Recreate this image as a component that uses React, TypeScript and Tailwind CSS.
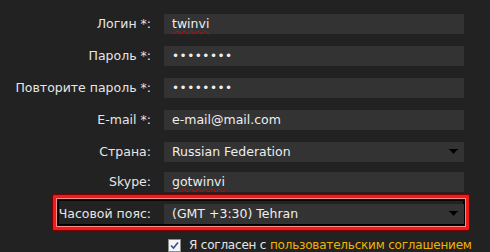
import React from 'react';

const font = { fontFamily: '"DejaVu Sans", Verdana, sans-serif' };

function Arrow() {
  return (
    <svg width="9" height="6" viewBox="0 0 9 6" className="shrink-0">
      <rect x="0" y="0" width="9" height="1" fill="#000" />
      <polygon points="1,1 8,1 4.5,5" fill="#000" />
    </svg>
  );
}

function Row({
  label,
  children,
  className = '',
}: {
  label: string;
  children: React.ReactNode;
  className?: string;
}) {
  return (
    <div className={`flex items-center ${className}`}>
      <label className="w-[152px] shrink-0 pr-[1px] text-right whitespace-nowrap text-[#e6e6e6]">{label}</label>
      <div className="ml-3 w-[300px]">{children}</div>
    </div>
  );
}

function Field({ children }: { children: React.ReactNode }) {
  return (
    <div className="flex h-5 items-center bg-[#333333] px-2 text-[#eeeeee]">{children}</div>
  );
}

function Select({ value }: { value: string }) {
  return (
    <div className="flex h-5 items-center justify-between bg-[#333333] pl-2 pr-[6px] text-[#eeeeee]">
      <span>{value}</span>
      <Arrow />
    </div>
  );
}

const Spell = ({ children }: { children: React.ReactNode }) => (
  <span className="underline decoration-wavy decoration-[#d00] decoration-1 underline-offset-2">
    {children}
  </span>
);

const Dots = () => <span className="text-[12px] tracking-[0.5px]">••••••••</span>;

export default function App() {
  return (
    <div className="h-[252px] w-[490px] overflow-hidden bg-[#222222] pt-[14px] text-[12.5px]" style={font}>
      <Row label="Логин *:">
        <Field>
          <Spell>twinvi</Spell>
        </Field>
      </Row>
      <Row label="Пароль *:" className="mt-3">
        <Field>
          <Dots />
        </Field>
      </Row>
      <Row label="Повторите пароль *:" className="mt-3">
        <Field>
          <Dots />
        </Field>
      </Row>
      <Row label="E-mail *:" className="mt-3">
        <Field>e-mail@mail.com</Field>
      </Row>
      <Row label="Страна:" className="mt-3">
        <Select value="Russian Federation" />
      </Row>
      <Row label="Skype:" className="mt-[10px]">
        <Field>
          <Spell>gotwinvi</Spell>
        </Field>
      </Row>
      <div className="ml-[53px] mt-[3px] h-[35px] w-[416px] rounded-[1px] border-[3px] border-[#ee1c1c] shadow-[0_0_0_1px_#7a0000,inset_0_0_0_1px_#ff8a8a,inset_0_0_0_3px_#000]">
        <div className="-ml-[56px] mt-[6px]">
          <Row label="Часовой пояс:">
            <Select value="(GMT +3:30) Tehran" />
          </Row>
        </div>
      </div>
      <div className="ml-[168px] mt-[6px] flex items-center gap-2 whitespace-nowrap text-[12px] tracking-[-0.2px] text-[#e6e6e6]">
        <span className="flex h-[13px] w-[13px] shrink-0 items-center justify-center border border-[#8c8c8c] bg-[#f4f4f4]">
          <svg width="9" height="9" viewBox="0 0 9 9">
            <path d="M1 4.5 L3.5 7 L8 1.5" stroke="#3a4f9a" strokeWidth="1.6" fill="none" />
          </svg>
        </span>
        <span>
          Я согласен с <span className="text-[#f0b400]">пользовательским соглашением</span>
        </span>
      </div>
    </div>
  );
}
